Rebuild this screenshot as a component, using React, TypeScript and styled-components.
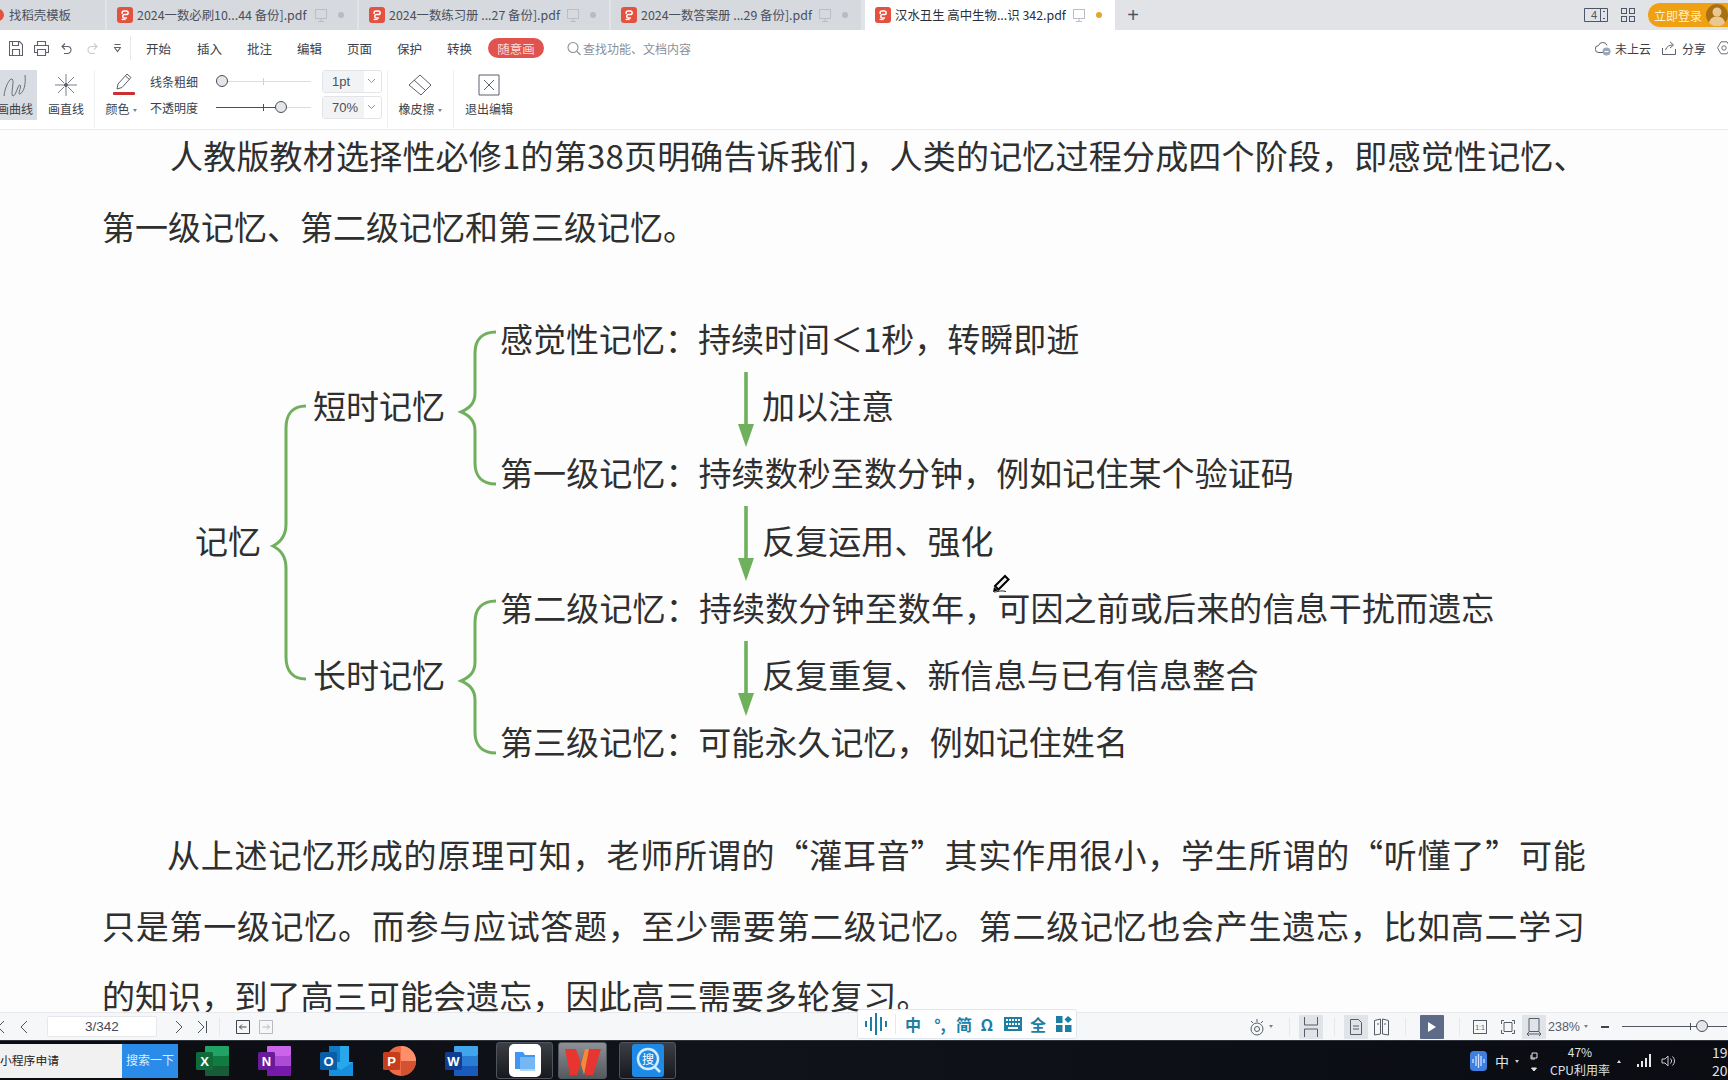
import React from "react";
import styled, { createGlobalStyle } from "styled-components";

const Global = createGlobalStyle`
  html, body { margin: 0; padding: 0; width: 1728px; height: 1080px; overflow: hidden; background: #fff; }
  * { box-sizing: border-box; }
  body { font-family: "Noto Sans CJK SC", "Liberation Sans", sans-serif; }
`;

const Win = styled.div`
  width: 1728px; height: 1080px; display: flex; flex-direction: column; overflow: hidden; position: relative;
`;

/* ---------- tab bar ---------- */
const TabBar = styled.div`
  height: 30px; flex: none; display: flex; align-items: stretch; background: #e1e3e7;
`;
const Tab = styled.div<{ $w: number; $ml?: number; $active?: boolean; $pl?: number }>`
  width: ${p => p.$w}px; margin-left: ${p => p.$ml ?? 0}px; padding-left: ${p => p.$pl ?? 10}px;
  display: flex; align-items: center; flex: none; overflow: hidden;
  background: ${p => (p.$active ? "#ffffff" : "#d6d9de")};
  color: ${p => (p.$active ? "#2a2f3a" : "#4a505c")};
`;
const TabTitle = styled.span<{ $w: number }>`
  width: ${p => p.$w}px; margin-left: 4px; font-size: 12.4px; white-space: nowrap; flex: none; letter-spacing: 0;
`;
const TabDot = styled.i<{ $on?: boolean; $ml: number }>`
  width: 6px; height: 6px; border-radius: 50%; margin-left: ${p => p.$ml}px; flex: none;
  background: ${p => (p.$on ? "#e3a72a" : "#b6bbc4")};
`;
const Monitor = styled.svg`
  width: 12px; height: 13px; margin-left: 8px; flex: none; fill: none; stroke: #b9bec7; stroke-width: 1;
`;
const PlusBtn = styled.div`
  margin-left: 12px; width: 12px; height: 30px; position: relative; color: #4a5268; font-size: 20px;
  display: flex; align-items: center; justify-content: center; flex: none; font-family: "Liberation Sans", sans-serif;
`;
const TabRight = styled.div`
  margin-left: auto; display: flex; align-items: center;
`;
const LoginPill = styled.div`
  width: 80px; height: 24px; margin-left: 13px; border-radius: 12px 0 0 12px; background: #f0a013;
  display: flex; align-items: center; padding-left: 6px; color: #fff2d0; font-size: 12px; white-space: nowrap;
`;
const Avatar = styled.svg`
  width: 22px; height: 22px; margin-left: 4px; flex: none;
`;

const PdfIcon = () => (
  <svg width="16" height="16" viewBox="0 0 16 16" style={{ flex: "none" }}>
    <rect width="16" height="16" rx="3" fill="#e4513f" />
    <path d="M5.2 7V5.6a1.7 1.7 0 0 1 1.7-1.7h2.4a1.8 1.8 0 0 1 0 3.7H7.4a1.7 1.7 0 0 0 0 3.4h2.6" fill="none" stroke="#fff" strokeWidth="1.5" />
    <path d="M4.6 12.4h4" stroke="#fff" strokeWidth="1.4" />
  </svg>
);
const MonitorIcon = () => (
  <Monitor viewBox="0 0 12 13"><rect x="0.5" y="0.5" width="11" height="9" /><path d="M6 9.5v3M3 12.5h6" /></Monitor>
);

/* ---------- ribbon ---------- */
const MenuRow = styled.div`
  height: 40px; flex: none; display: flex; align-items: center; background: #fff; position: relative; padding-bottom: 4px;
`;
const QuickIcon = styled.svg<{ $ml: number; $w: number }>`
  margin-left: ${p => p.$ml}px; width: ${p => p.$w}px; height: 15px; flex: none; fill: none; stroke: #5b616d; stroke-width: 1.1;
`;
const VSep = styled.i<{ $ml: number; $h?: number; $c?: string }>`
  display: block; width: 1px; height: ${p => p.$h ?? 24}px; margin-left: ${p => p.$ml}px; flex: none; background: ${p => p.$c ?? "#e6e8ec"};
`;
const MenuItem = styled.span<{ $ml: number }>`
  margin-left: ${p => p.$ml}px; width: 25px; font-size: 12.5px; color: #3a3f4a; white-space: nowrap; flex: none;
`;
const DrawPill = styled.span`
  margin-left: 16px; width: 56px; height: 20px; border-radius: 10px; background: #e0534f; color: #ffd9d6;
  font-size: 12.5px; display: flex; align-items: center; justify-content: center; flex: none;
`;
const SearchHint = styled.span`
  margin-left: 2px; font-size: 12px; color: #8a8f99; white-space: nowrap;
`;
const RightMenu = styled.div`
  margin-left: auto; display: flex; align-items: center; color: #3a3f4a; font-size: 12px; white-space: nowrap;
`;

const ToolRow = styled.div`
  height: 60px; flex: none; display: flex; align-items: flex-start; background: #fff; border-bottom: 1px solid #e9ebee; 
`;
const ToolBtn = styled.div<{ $w: number; $ml?: number; $active?: boolean }>`
  width: ${p => p.$w}px; margin-left: ${p => p.$ml ?? 0}px; height: 50px; flex: none;
  display: flex; flex-direction: column; align-items: center; justify-content: space-between;
  padding: 2px 0 3px; background: ${p => (p.$active ? "#d8dde4" : "transparent")};
  font-size: 12px; color: #3a3f4a; white-space: nowrap;
`;
const ToolSvg = styled.svg`
  width: 26px; height: 26px; fill: none; stroke: #5b616d; stroke-width: 1;
`;
const Caret = styled.i`
  display: inline-block; width: 0; height: 0; margin-left: 3px; vertical-align: 2px;
  border-left: 2.5px solid transparent; border-right: 2.5px solid transparent; border-top: 3px solid #7b808a;
`;
const ToolSep = styled.i<{ $ml: number }>`
  display: block; width: 1px; height: 58px; margin-left: ${p => p.$ml}px; flex: none; background: #eef0f2;
`;
const SliderGrid = styled.div`
  margin-left: 12px; display: grid; grid-template-columns: 48px 95px 60px; row-gap: 3px; grid-auto-rows: 23px;
  align-items: center; flex: none;
`;
const SliderLabel = styled.span`
  font-size: 12px; color: #3a3f4a; white-space: nowrap;
`;
const Track = styled.div<{ $fill: number }>`
  margin-left: 18px; width: 95px; height: 1px; position: relative;
  background: linear-gradient(90deg, #4a4f58 ${p => p.$fill}%, #d9dce0 ${p => p.$fill}%);
`;
const Tick = styled.i<{ $x: number; $dark?: boolean }>`
  position: absolute; left: ${p => p.$x}px; top: -3px; width: 1px; height: 7px; background: ${p => (p.$dark ? "#4a4f58" : "#cdd0d5")};
`;
const Knob = styled.i<{ $x: number }>`
  position: absolute; left: ${p => p.$x - 6}px; top: -6px; width: 12px; height: 12px; border-radius: 50%;
  background: #e4e6ea; border: 1px solid #4a4f58;
`;
const Select = styled.div`
  margin-left: 29px; width: 60px; height: 23px; border: 1px solid #e2e4e8; border-radius: 3px; display: flex;
  font-family: "Liberation Sans", sans-serif; font-size: 13px; color: #4a505c;
`;
const SelectVal = styled.span`
  width: 41px; background: #f2f3f5; padding-left: 9px; line-height: 21px;
`;
const SelectArrow = styled.svg`
  width: 9px; height: 6px; margin: 7px 0 0 3px; fill: none; stroke: #8f949d;
`;

/* ---------- page ---------- */
const Page = styled.main`
  flex: 1; min-height: 0; overflow: hidden; background: #fdfdfd; padding-left: 102px; color: #2f2f2f;
  font-size: 33px; font-weight: 400;
`;
const Paragraph = styled.div<{ $mt: number }>`
  margin-top: ${p => p.$mt}px; line-height: 70.5px;
`;
const Line = styled.div<{ $indent?: number; $ls?: number }>`
  white-space: nowrap; padding-left: ${p => p.$indent ?? 0}px; letter-spacing: ${p => p.$ls ?? 0}px;
`;
const Diagram = styled.div`
  margin: 44px 0 0 93px; display: grid; grid-template-columns: 66px 52px 133px 54px 1fr;
  grid-template-rows: repeat(7, 67.2px); align-items: center; white-space: nowrap; line-height: 1;
`;
const Node = styled.div<{ $row: number; $col: number; $ls?: number }>`
  grid-row: ${p => p.$row}; grid-column: ${p => p.$col}; letter-spacing: ${p => p.$ls ?? 0}px;
`;
const Brace = styled.svg<{ $from: number; $to: number; $col: number }>`
  grid-row: ${p => p.$from} / ${p => p.$to}; grid-column: ${p => p.$col}; width: 100%; height: 100%;
  fill: none; stroke: #6fb05c; stroke-width: 3; overflow: visible;
`;
const ArrowRow = styled.div<{ $row: number }>`
  grid-row: ${p => p.$row}; grid-column: 5; display: flex; align-items: center; height: 67px; padding-left: 237px;
`;
const Arrow = styled.svg`
  width: 18px; height: 76px; flex: none; margin-top: 8px;
`;
const ArrowLabel = styled.span`
  margin-left: 7px; letter-spacing: 0.1px;
`;
const PenCursor = styled.svg`
  position: absolute; left: 992px; top: 574px; width: 18px; height: 19px;
`;

/* ---------- status bar ---------- */
const StatusBar = styled.div`
  height: 28px; flex: none; display: flex; align-items: center; background: #f6f7f9; border-top: 1px solid #e6e8eb;
  position: relative;
`;
const NavIcon = styled.svg<{ $ml: number }>`
  margin-left: ${p => p.$ml}px; width: 12px; height: 14px; flex: none; fill: none; stroke: #4d535e; stroke-width: 1;
`;
const PageInput = styled.div`
  margin-left: 17px; width: 110px; height: 21px; background: #fff; border: 1px solid #e6e8eb; border-radius: 2px;
  text-align: center; font-family: "Liberation Sans", sans-serif; font-size: 13.5px; line-height: 20px; color: #444a55; flex: none;
`;
const SmallBox = styled.svg<{ $ml: number; $dim?: boolean }>`
  margin-left: ${p => p.$ml}px; width: 14px; height: 14px; flex: none; fill: none;
  stroke: ${p => (p.$dim ? "#b7bbc2" : "#3f444f")};
`;
const ImeBar = styled.div`
  position: absolute; left: 857px; top: -4px; width: 220px; height: 30px; background: #fff; border: 1px solid #dfe8ee;
  border-radius: 3px; display: flex; align-items: center; color: #1c7ea3; font-weight: 700; font-size: 16px; line-height: 1;
`;
const ImeItem = styled.span<{ $ml: number; $w: number }>`
  margin-left: ${p => p.$ml}px; width: ${p => p.$w}px; text-align: center; flex: none;
`;
const StatusRight = styled.div`
  margin-left: 975px; display: flex; align-items: center; flex: none; width: 500px;
`;
const StatusIcon = styled.svg<{ $ml: number; $w?: number }>`
  margin-left: ${p => p.$ml}px; width: ${p => p.$w ?? 16}px; height: 18px; flex: none; fill: none; stroke: #565c68; stroke-width: 1;
`;
const StatusBtn = styled.div<{ $ml: number; $on?: boolean; $dark?: boolean }>`
  margin-left: ${p => p.$ml}px; width: 24px; height: 24px; flex: none; display: flex; align-items: center; justify-content: center;
  background: ${p => (p.$dark ? "#5d6b88" : p.$on ? "#e0e3e8" : "transparent")}; border-radius: 1px;
`;
const Zoom = styled.span`
  margin-left: 2px; font-family: "Liberation Sans", sans-serif; font-size: 12.5px; color: #565c68; flex: none; width: 33px; white-space: nowrap;
`;
const ZoomTrack = styled.div`
  margin-left: 13px; width: 105px; height: 1px; background: #50555f; position: relative; flex: none;
`;

/* ---------- taskbar ---------- */
const Taskbar = styled.div`
  height: 40px; flex: none; display: flex; align-items: center; position: relative; color: #eef0f3;
  background: linear-gradient(90deg, #0b0c10, #10131a 40%, #0a0c12); border-top: 1px solid #30343c;
`;
const SearchBox = styled.div`
  width: 122px; height: 34px; background: #f1f1f1; color: #222; font-size: 11.8px; line-height: 31px; white-space: nowrap; flex: none;
`;
const SearchBtn = styled.div`
  width: 56px; height: 34px; background: #2a8be9; color: #dbeeff; font-size: 12px; line-height: 31px; text-align: center; white-space: nowrap; flex: none;
`;
const AppIcon = styled.svg<{ $ml: number }>`
  margin-left: ${p => p.$ml}px; width: 33px; height: 30px; flex: none;
`;
const AppTile = styled.div<{ $ml: number; $w: number; $on?: boolean }>`
  margin-left: ${p => p.$ml}px; width: ${p => p.$w}px; height: 37px; flex: none; display: flex; align-items: center; justify-content: center;
  border: 1px solid #50545c; border-radius: 3px;
  background: ${p => (p.$on ? "linear-gradient(#8d9094, #55585d)" : "linear-gradient(#3b3e44, #17191e)")};
`;
const Tray = styled.div`
  position: absolute; right: 0; top: 0; height: 40px; width: 258px; display: flex; align-items: center; color: #dfe3e8; overflow: hidden;
`;
const TrayText = styled.div<{ $ml: number }>`
  margin-left: ${p => p.$ml}px; flex: none; text-align: center; font-size: 12px; line-height: 18px; white-space: nowrap;
`;

const OfficeIcon = ({ ml, letter, c1, c2, c3, c4 }: { ml: number; letter: string; c1: string; c2: string; c3: string; c4: string }) => (
  <AppIcon $ml={ml} viewBox="0 0 33 30">
    <rect x="9" y="0" width="24" height="10" rx="1" fill={c1} />
    <rect x="9" y="10" width="24" height="10" fill={c2} />
    <rect x="9" y="20" width="24" height="10" rx="1" fill={c3} />
    <rect x="0" y="6" width="17" height="18" rx="1.5" fill={c4} />
    <text x="8.5" y="20" textAnchor="middle" fontSize="13" fontWeight="700" fill="#fff" fontFamily="Liberation Sans, sans-serif">{letter}</text>
  </AppIcon>
);

const brace = "M50 27C36 27 29 35 29 48V88C29 98 24 103 15 107C24 111 29 116 29 126V158C29 171 36 179 50 179";

const FlowArrow = () => (
  <Arrow viewBox="0 0 18 76">
    <path d="M9 0V56" stroke="#6fb05c" strokeWidth="3.6" />
    <path d="M1 52H17L9 75z" fill="#6fb05c" />
  </Arrow>
);

export default function App() {
  return (
    <Win>
      <Global />
      <TabBar>
        <Tab $w={105} $pl={0}>
          <svg width="7" height="16" viewBox="0 0 7 16" style={{ flex: "none", marginLeft: -2 }}><circle cx="0" cy="8" r="6" fill="#e4513f" /></svg>
          <TabTitle $w={70} style={{ marginLeft: 4 }}>找稻壳模板</TabTitle>
        </Tab>
        <Tab $w={250} $ml={2}><PdfIcon /><TabTitle $w={170}>2024一数必刷10...44 备份].pdf</TabTitle><MonitorIcon /><TabDot $on={false} $ml={11} /></Tab>
        <Tab $w={250} $ml={2} ><PdfIcon /><TabTitle $w={170}>2024一数练习册 ...27 备份].pdf</TabTitle><MonitorIcon /><TabDot $ml={11} /></Tab>
        <Tab $w={250} $ml={2}><PdfIcon /><TabTitle $w={170}>2024一数答案册 ...29 备份].pdf</TabTitle><MonitorIcon /><TabDot $ml={11} /></Tab>
        <Tab $w={250} $ml={4} $active><PdfIcon /><TabTitle $w={170}>汉水丑生 高中生物...识 342.pdf</TabTitle><MonitorIcon /><TabDot $on $ml={11} /></Tab>
        <PlusBtn>+</PlusBtn>
        <TabRight>
          <svg width="24" height="14" viewBox="0 0 24 14" fill="none" stroke="#4d5568">
            <path d="M.5.5h23v13H.5zM16.5.5v13M19 3.5h2M19 10.5h2" />
            <text x="10" y="11" fontSize="11" fill="#4d5568" stroke="none" textAnchor="middle" fontFamily="Liberation Sans, sans-serif">4</text>
          </svg>
          <svg width="14" height="14" viewBox="0 0 14 14" fill="none" stroke="#4d5568" style={{ marginLeft: 13 }}>
            <rect x=".5" y=".5" width="5" height="5" /><rect x="8.5" y=".5" width="5" height="5" /><rect x=".5" y="8.5" width="5" height="5" /><rect x="8.5" y="8.5" width="5" height="5" />
          </svg>
          <LoginPill>立即登录
            <Avatar viewBox="0 0 22 22"><circle cx="11" cy="11" r="11" fill="#a96f13" /><circle cx="11" cy="8" r="4.5" fill="#e8c890" /><path d="M3 19c1-5 4-6.500 8-6.500s7 1.500 8 6.500a11 11 0 0 1-16 0z" fill="#e8c890" /></Avatar>
          </LoginPill>
        </TabRight>
      </TabBar>

      <MenuRow>
        <QuickIcon $ml={9} $w={14} viewBox="0 0 14 15"><path d="M.5.5h10l3 3v11H.5zM3.500.5v4h6v-4M3.500 14.500v-6h7v6" /></QuickIcon>
        <QuickIcon $ml={11} $w={15} viewBox="0 0 15 15"><path d="M3.500 4.500V.5h8v4M3.500 11.500H.5v-7h14v7h-3M3.500 8.500h8v6h-8z" /></QuickIcon>
        <QuickIcon $ml={12} $w={11} viewBox="0 0 11 15"><path d="M4 2.500L1 5.500l3 3M1 5.500h5.500a3.500 3.500 0 0 1 0 7H3" /></QuickIcon>
        <QuickIcon $ml={14} $w={12} viewBox="0 0 12 15" style={{ stroke: "#c9ccd1" }}><path d="M8 2.500l3 3-3 3M11 5.500H5.500a3.500 3.500 0 0 0 0 7H9" /></QuickIcon>
        <QuickIcon $ml={16} $w={7} viewBox="0 0 7 15"><path d="M.5 3.500h6M.5 6.500l3 4 3-4z" /></QuickIcon>
        <VSep $ml={9} />
        <MenuItem $ml={15}>开始</MenuItem>
        <MenuItem $ml={26}>插入</MenuItem>
        <MenuItem $ml={25}>批注</MenuItem>
        <MenuItem $ml={25}>编辑</MenuItem>
        <MenuItem $ml={25}>页面</MenuItem>
        <MenuItem $ml={25}>保护</MenuItem>
        <MenuItem $ml={25}>转换</MenuItem>
        <DrawPill>随意画</DrawPill>
        <QuickIcon $ml={23} $w={14} viewBox="0 0 14 15" style={{ stroke: "#8a8f99" }}><circle cx="6" cy="6.500" r="5" /><path d="M10 10.500l3.500 3.500" /></QuickIcon>
        <SearchHint>查找功能、文档内容</SearchHint>
        <RightMenu>
          <svg width="16" height="15" viewBox="0 0 16 15" fill="none" stroke="#5b616d"><path d="M8 11.500H4a3.500 3.500 0 0 1-.5-7A4.500 4.500 0 0 1 12 4.500" /><circle cx="11.500" cy="10.500" r="4" fill="#9aa6ba" stroke="none" /><path d="M9.500 10.500h4" stroke="#fff" /></svg>
          <span style={{ marginLeft: 4 }}>未上云</span>
          <svg width="14" height="14" viewBox="0 0 14 14" fill="none" stroke="#5b616d" style={{ marginLeft: 11 }}><path d="M.5 7v6.500h13V8M3.500 9c1-3.500 4-5 7-5M8 .8l3.500 3.200L8 7" /></svg>
          <span style={{ marginLeft: 6 }}>分享</span>
          <svg width="14" height="14" viewBox="0 0 14 14" fill="none" stroke="#6b717c" style={{ marginLeft: 11, marginRight: -3 }}><path d="M4 .8h6l3.500 6-3.500 6H4l-3.500-6z" /><circle cx="7" cy="7" r="2.200" /></svg>
        </RightMenu>
      </MenuRow>

      <ToolRow>
        <ToolBtn $w={44} $ml={-7} $active>
          <ToolSvg viewBox="0 0 26 26" style={{ marginLeft: -2, stroke: "#6a707a" }}><path d="M3 24C4 14 9 6 11 7C14 9 9 23 12 24C15 24 17 12 19 13C21 15 16 23 19 22C23 20 25 12 24 3" /></ToolSvg>
          画曲线
        </ToolBtn>
        <ToolBtn $w={36} $ml={11}>
          <ToolSvg viewBox="0 0 26 26"><path d="M13 2v9M13 15v9M2 13h9M15 13h9M5 5l6 6M15 15l6 6M21 5l-6 6M11 15l-6 6" strokeWidth=".8" /><circle cx="13" cy="13" r="1.600" fill="#5b616d" /></ToolSvg>
          画直线
        </ToolBtn>
        <ToolSep $ml={10} />
        <ToolBtn $w={32} $ml={10}>
          <svg width="22" height="26" viewBox="0 0 22 26" fill="none" stroke="#5b616d" style={{ marginLeft: 5 }}>
            <path d="M4 17l1-5L14 2l4 3.500-9 10zM12.500 4l4 3.500" />
            <rect x="0" y="20" width="22" height="3" rx="1" fill="#cc2f2f" stroke="none" />
          </svg>
          <span>颜色<Caret /></span>
        </ToolBtn>
        <SliderGrid style={{ marginLeft: 13 }}>
          <SliderLabel>线条粗细</SliderLabel>
          <Track $fill={0} style={{ gridColumn: 2 }}><Tick $x={47} /><Knob $x={6} /></Track>
          <Select style={{ gridColumn: 3 }}><SelectVal>1pt</SelectVal><SelectArrow viewBox="0 0 9 6"><path d="M1 1l3.500 3.500L8 1" /></SelectArrow></Select>
          <SliderLabel>不透明度</SliderLabel>
          <Track $fill={68} style={{ gridColumn: 2 }}><Tick $x={47} $dark /><Knob $x={65} /></Track>
          <Select style={{ gridColumn: 3 }}><SelectVal>70%</SelectVal><SelectArrow viewBox="0 0 9 6"><path d="M1 1l3.500 3.500L8 1" /></SelectArrow></Select>
        </SliderGrid>
        <ToolSep $ml={34} />
        <ToolBtn $w={44} $ml={10}>
          <ToolSvg viewBox="0 0 26 26"><path d="M13 3l11 10-10 10L2 13zM7 8l11 10" /></ToolSvg>
          <span>橡皮擦<Caret /></span>
        </ToolBtn>
        <ToolSep $ml={11} />
        <ToolBtn $w={48} $ml={11}>
          <ToolSvg viewBox="0 0 26 26" stroke="#333"><path d="M3 3h20v20H3zM8 8l10 10M18 8L8 18" /></ToolSvg>
          退出编辑
        </ToolBtn>
      </ToolRow>

      <Page>
        <Paragraph $mt={-10}>
          <Line $indent={68} $ls={0.2}>人教版教材选择性必修1的第38页明确告诉我们，人类的记忆过程分成四个阶段，即感觉性记忆、</Line>
          <Line>第一级记忆、第二级记忆和第三级记忆。</Line>
        </Paragraph>
        <Diagram>
          <Node $row={4} $col={1}>记忆</Node>
          <Brace $from={2} $to={7} $col={2} viewBox="0 0 52 336" preserveAspectRatio="none">
            <path d="M45 34C32 34 25 42 25 56V152C25 163 20 170 12 174C20 178 25 185 25 196V285C25 299 32 307 45 307" />
          </Brace>
          <Node $row={2} $col={3}>短时记忆</Node>
          <Node $row={6} $col={3}>长时记忆</Node>
          <Brace $from={1} $to={4} $col={4} viewBox="0 0 54 201.600" preserveAspectRatio="none"><path d={brace} /></Brace>
          <Brace $from={5} $to={8} $col={4} viewBox="0 0 54 201.600" preserveAspectRatio="none"><path d={brace} /></Brace>
          <Node $row={1} $col={5}>感觉性记忆：持续时间＜1秒，转瞬即逝</Node>
          <ArrowRow $row={2}><FlowArrow /><ArrowLabel>加以注意</ArrowLabel></ArrowRow>
          <Node $row={3} $col={5} $ls={0.08}>第一级记忆：持续数秒至数分钟，例如记住某个验证码</Node>
          <ArrowRow $row={4}><FlowArrow /><ArrowLabel>反复运用、强化</ArrowLabel></ArrowRow>
          <Node $row={5} $col={5} $ls={0.15}>第二级记忆：持续数分钟至数年，可因之前或后来的信息干扰而遗忘</Node>
          <ArrowRow $row={6}><FlowArrow /><ArrowLabel>反复重复、新信息与已有信息整合</ArrowLabel></ArrowRow>
          <Node $row={7} $col={5} $ls={0.05}>第三级记忆：可能永久记忆，例如记住姓名</Node>
        </Diagram>
        <Paragraph $mt={44}>
          <Line $indent={65} $ls={0.8}>从上述记忆形成的原理可知，老师所谓的“灌耳音”其实作用很小，学生所谓的“听懂了”可能</Line>
          <Line $ls={0.72}>只是第一级记忆。而参与应试答题，至少需要第二级记忆。第二级记忆也会产生遗忘，比如高二学习</Line>
          <Line $ls={0.1}>的知识，到了高三可能会遗忘，因此高三需要多轮复习。</Line>
        </Paragraph>
      </Page>
      <PenCursor viewBox="0 0 18 19"><path d="M3 12L13 2l3.500 3.500-10 10z" fill="#eee" stroke="#000" strokeWidth="2" /><path d="M2 13l4 3.500-5 1.500z" fill="#000" /><path d="M2 18c4 0 6-2 12-.5" stroke="#222" fill="none" /></PenCursor>

      <StatusBar>
        <NavIcon $ml={-5} viewBox="0 0 12 14"><path d="M9 1L3 7l6 6" /></NavIcon>
        <NavIcon $ml={11} viewBox="0 0 12 14"><path d="M9 1L3 7l6 6" /></NavIcon>
        <PageInput>3/342</PageInput>
        <NavIcon $ml={16} viewBox="0 0 12 14"><path d="M3 1l6 6-6 6" /></NavIcon>
        <NavIcon $ml={11} viewBox="0 0 12 14"><path d="M2 1l6 6-6 6M10.500 1v12" /></NavIcon>
        <VSep $ml={11} $h={18} />
        <SmallBox $ml={16} viewBox="0 0 14 14"><path d="M.5.5h13v13H.5zM10.500 7h-7M6 4.500L3.500 7 6 9.500" /></SmallBox>
        <SmallBox $ml={9} $dim viewBox="0 0 14 14"><path d="M.5.5h13v13H.5zM3.500 7h7M8 4.500L10.500 7 8 9.500" /></SmallBox>
        <ImeBar>
          <svg width="24" height="24" viewBox="0 0 24 24" stroke="#1c7ea3" strokeWidth="2" style={{ marginLeft: 6, flex: "none" }}><path d="M2 9v6M7 5v14M12 1v22M17 5v14M22 9v6" /></svg>
          <VSep $ml={7} $h={20} />
          <ImeItem $ml={9} $w={16}>中</ImeItem>
          <ImeItem $ml={10} $w={18}>°,</ImeItem>
          <ImeItem $ml={7} $w={16}>简</ImeItem>
          <ImeItem $ml={7} $w={16}>Ω</ImeItem>
          <svg width="18" height="14" viewBox="0 0 18 14" style={{ marginLeft: 9, flex: "none" }} fill="#1c7ea3"><path d="M0 0h18v14H0zM2 2v2h2V2zm3 0v2h2V2zm3 0v2h2V2zm3 0v2h2V2zm3 0v2h2V2zM2 6v2h2V6zm3 0v2h2V6zm3 0v2h2V6zm3 0v2h2V6zm3 0v2h2V6zM4 10v2h10v-2z" fillRule="evenodd" /></svg>
          <ImeItem $ml={8} $w={16}>全</ImeItem>
          <svg width="16" height="16" viewBox="0 0 16 16" style={{ marginLeft: 10, flex: "none" }} fill="#1c7ea3"><rect width="6.500" height="7" /><path d="M12 0l4 3.500L12 7 8.500 3.500z" /><rect y="9" width="6.500" height="7" /><rect x="9" y="9" width="6.500" height="7" /></svg>
        </ImeBar>
        <StatusRight>
          <StatusIcon $ml={0} $w={18} viewBox="0 0 18 18"><circle cx="9" cy="11" r="6" /><circle cx="9" cy="11" r="2.500" /><path d="M9 1v3M3 3l2 2M15 3l-2 2" /></StatusIcon>
          <Caret />
          <VSep $ml={16} $h={18} />
          <StatusBtn $ml={9} $on><svg width="16" height="20" viewBox="0 0 16 20" fill="none" stroke="#565c68"><path d="M1.500 0v8h13V0M1.500 20v-8h13v8" /></svg></StatusBtn>
          <VSep $ml={11} $h={18} />
          <StatusBtn $ml={9} $on><svg width="12" height="16" viewBox="0 0 12 16" fill="none" stroke="#565c68"><path d="M.5.500h8l3 3v12H.5zM3 7h6M3 10h6" /></svg></StatusBtn>
          <StatusIcon $ml={6} $w={15} viewBox="0 0 15 18"><path d="M.5 2.500l6-1.500v15l-6 1zM14.500 2.500L8.500 1v15l6 1zM3 6h2M10 6h2" /></StatusIcon>
          <VSep $ml={16} $h={18} />
          <StatusBtn $ml={14} $dark><svg width="8" height="10" viewBox="0 0 8 10"><path d="M0 0l8 5-8 5z" fill="#fff" /></svg></StatusBtn>
          <VSep $ml={15} $h={18} />
          <StatusIcon $ml={13} $w={14} viewBox="0 0 14 18"><rect x=".5" y="2.500" width="13" height="13" /><text x="7" y="12" fontSize="7" textAnchor="middle" fill="#565c68" stroke="none" fontFamily="Liberation Sans, sans-serif">1:1</text></StatusIcon>
          <StatusIcon $ml={14} $w={14} viewBox="0 0 14 18"><path d="M3 2.500H.5V6M11 2.500h2.500V6M3 15.500H.5V12M11 15.500h2.500V12M3 4.500h8v9H3z" /></StatusIcon>
          <StatusBtn $ml={7} $on><svg width="16" height="18" viewBox="0 0 16 18" fill="none" stroke="#565c68"><path d="M3 .5h10v13H3zM1 16h14M3 14l-2 2 2 2M13 14l2 2-2 2" /></svg></StatusBtn>
          <Zoom>238%</Zoom>
          <Caret />
          <i style={{ display: "block", width: 8, height: 2, marginLeft: 13, background: "#3f444f", flex: "none" }} />
          <ZoomTrack><Tick $x={68} $dark /><Knob $x={80} /></ZoomTrack>
        </StatusRight>
      </StatusBar>

      <Taskbar>
        <SearchBox>小程序申请</SearchBox>
        <SearchBtn>搜索一下</SearchBtn>
        <OfficeIcon ml={18} letter="X" c1="#21a366" c2="#107c41" c3="#185c37" c4="#0f6b3a" />
        <OfficeIcon ml={29} letter="N" c1="#ca64ea" c2="#ae4bd5" c3="#7719aa" c4="#6a1b9a" />
        <AppIcon $ml={29} viewBox="0 0 33 30">
          <rect x="9" y="0" width="20" height="18" fill="#0f7bc6" /><rect x="20" y="0" width="9" height="18" fill="#28a8ea" />
          <path d="M9 16h24v14H9z" fill="#1490df" /><path d="M9 16l12 8 12-8" fill="#28a8ea" />
          <rect x="0" y="6" width="17" height="18" rx="1.500" fill="#0a5ea8" />
          <text x="8.500" y="20" textAnchor="middle" fontSize="13" fontWeight="700" fill="#fff" fontFamily="Liberation Sans, sans-serif">O</text>
        </AppIcon>
        <AppIcon $ml={30} viewBox="0 0 33 30">
          <circle cx="18" cy="15" r="15" fill="#ed6c47" /><path d="M18 0a15 15 0 0 1 15 15H18z" fill="#ff8f6b" /><path d="M18 15h15a15 15 0 0 1-15 15z" fill="#d35230" />
          <rect x="0" y="6" width="17" height="18" rx="1.500" fill="#c43e1c" />
          <text x="8.500" y="20" textAnchor="middle" fontSize="13" fontWeight="700" fill="#fff" fontFamily="Liberation Sans, sans-serif">P</text>
        </AppIcon>
        <OfficeIcon ml={29} letter="W" c1="#41a5ee" c2="#2b7cd3" c3="#185abd" c4="#103f91" />
        <AppTile $ml={18} $w={57}>
          <svg width="32" height="33" viewBox="0 0 32 33"><rect width="32" height="33" rx="5" fill="#fff" /><path d="M6 8h8l2 3h10v14H6z" fill="#3f97ef" /><path d="M11 13h15v14H11z" fill="#8cc4f7" opacity=".7" /></svg>
        </AppTile>
        <AppTile $ml={5} $w={49} $on>
          <svg width="36" height="28" viewBox="0 0 36 28"><path d="M0 2h11l5 15 4-15h4l5 0h7l-8 26h-7l-5-13-4 13h-7z" fill="#e8352f" /><path d="M16 17l4-15h4l-5 26z" fill="#f28a3b" /></svg>
        </AppTile>
        <AppTile $ml={12} $w={57}>
          <svg width="32" height="33" viewBox="0 0 32 33"><rect width="32" height="33" rx="3" fill="#1f8ae6" /><circle cx="16" cy="15" r="10" fill="none" stroke="#d4ecff" strokeWidth="2.500" /><path d="M22 22l6 6" stroke="#d4ecff" strokeWidth="2.500" /><text x="16" y="20" textAnchor="middle" fontSize="12" fill="#fff">搜</text></svg>
        </AppTile>
        <Tray>
          <svg width="17" height="20" viewBox="0 0 17 20" style={{ flex: "none" }}><rect width="17" height="20" rx="4" fill="#3f7fe0" /><path d="M3 8v4M6 5v10M8.500 3v14M11 5v10M14 8v4" stroke="#cfe2ff" strokeWidth="1.300" /></svg>
          <TrayText $ml={8} style={{ fontSize: 14 }}>中</TrayText>
          <Caret style={{ marginLeft: 6, borderTopColor: "#ccd" }} />
          <svg width="8" height="22" viewBox="0 0 8 22" fill="none" stroke="#dfe3e8" style={{ marginLeft: 11, flex: "none" }}><path d="M2 3h5v5H2zM1 5v4h4" /><path d="M1.500 18h5L4 21z" fill="#dfe3e8" /></svg>
          <TrayText $ml={12}>47%<br />CPU利用率</TrayText>
          <Caret style={{ marginLeft: 7, transform: "rotate(180deg)", borderTopColor: "#dfe3e8" }} />
          <svg width="15" height="14" viewBox="0 0 15 14" fill="#e6e8ec" style={{ marginLeft: 16, flex: "none" }}><rect x="0" y="10" width="2" height="3" /><rect x="4" y="7" width="2" height="6" /><rect x="8" y="4" width="2" height="9" /><rect x="12" y="0" width="2" height="13" /></svg>
          <svg width="15" height="14" viewBox="0 0 15 14" fill="none" stroke="#c7ccd3" style={{ marginLeft: 9, flex: "none" }}><path d="M1 5v4h3l3 3V2L4 5zM9.500 4.500a3.500 3.500 0 0 1 0 5M11.500 2.500a6 6 0 0 1 0 9" /></svg>
          <TrayText $ml={36} style={{ fontSize: 14 }}>19<br />20</TrayText>
        </Tray>
      </Taskbar>
    </Win>
  );
}
